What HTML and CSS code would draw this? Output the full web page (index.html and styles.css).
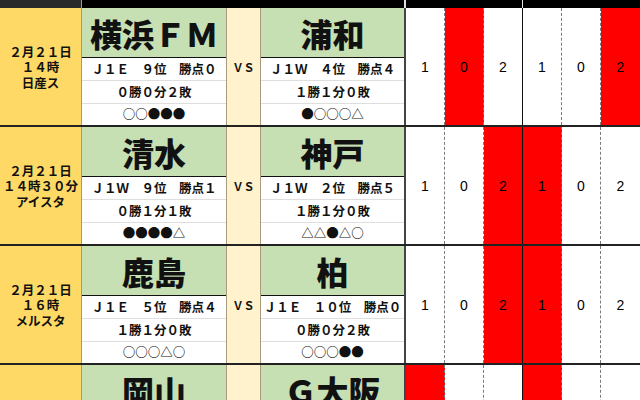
FILE: index.html
```html
<!DOCTYPE html>
<html lang="ja">
<head>
<meta charset="utf-8">
<link rel="stylesheet" href="styles.css">
</head>
<body>
<div class="sheet">
  <div class="row top">
    <div class="left"></div>
    <div class="team t1"></div>
    <div class="vs"></div>
    <div class="team t2"></div>
    <div class="sc"></div><div class="sc"></div><div class="sc mid"></div><div class="sc"></div><div class="sc"></div><div class="sc last"></div>
  </div>

  <div class="row block">
    <div class="left"><span>２月２１日</span><span>１４時</span><span>日産ス</span></div>
    <div class="team t1">
      <div class="name">横浜ＦＭ</div>
      <div class="info">Ｊ１Ｅ　９位　勝点０</div>
      <div class="info">０勝０分２敗</div>
      <div class="info last">○○●●●</div>
    </div>
    <div class="vs">ＶＳ</div>
    <div class="team t2">
      <div class="name">浦和</div>
      <div class="info">Ｊ１Ｗ　４位　勝点４</div>
      <div class="info">１勝１分０敗</div>
      <div class="info last">●○○○△</div>
    </div>
    <div class="sc">1</div><div class="sc red">0</div><div class="sc mid">2</div><div class="sc">1</div><div class="sc">0</div><div class="sc last red">2</div>
  </div>

  <div class="row block">
    <div class="left"><span>２月２１日</span><span>１４時３０分</span><span>アイスタ</span></div>
    <div class="team t1">
      <div class="name">清水</div>
      <div class="info">Ｊ１Ｗ　９位　勝点１</div>
      <div class="info">０勝１分１敗</div>
      <div class="info last">●●●●△</div>
    </div>
    <div class="vs">ＶＳ</div>
    <div class="team t2">
      <div class="name">神戸</div>
      <div class="info">Ｊ１Ｗ　２位　勝点５</div>
      <div class="info">１勝１分０敗</div>
      <div class="info last">△△●△○</div>
    </div>
    <div class="sc">1</div><div class="sc">0</div><div class="sc mid red">2</div><div class="sc red">1</div><div class="sc">0</div><div class="sc last">2</div>
  </div>

  <div class="row block">
    <div class="left"><span>２月２１日</span><span>１６時</span><span>メルスタ</span></div>
    <div class="team t1">
      <div class="name">鹿島</div>
      <div class="info">Ｊ１Ｅ　５位　勝点４</div>
      <div class="info">１勝１分０敗</div>
      <div class="info last">○○○△○</div>
    </div>
    <div class="vs">ＶＳ</div>
    <div class="team t2">
      <div class="name">柏</div>
      <div class="info wide">Ｊ１Ｅ　１０位　勝点０</div>
      <div class="info">０勝０分２敗</div>
      <div class="info last">○○○●●</div>
    </div>
    <div class="sc">1</div><div class="sc">0</div><div class="sc mid red">2</div><div class="sc red">1</div><div class="sc">0</div><div class="sc last">2</div>
  </div>

  <div class="row block">
    <div class="left"></div>
    <div class="team t1">
      <div class="name">岡山</div>
    </div>
    <div class="vs"></div>
    <div class="team t2">
      <div class="name">Ｇ大阪</div>
    </div>
    <div class="sc red"></div><div class="sc"></div><div class="sc mid"></div><div class="sc red"></div><div class="sc"></div><div class="sc last"></div>
  </div>
</div>
</body>
</html>
```

FILE: styles.css
```css
html, body {
  margin: 0;
  padding: 0;
  background: #ffffff;
}
body {
  width: 640px;
  height: 400px;
  overflow: hidden;
  font-family: "Noto Sans CJK JP", "Liberation Sans", sans-serif;
  color: #111;
}
.sheet {
  display: flex;
  flex-direction: column;
  height: 400px;
  overflow: hidden;
}
.row {
  display: flex;
  box-sizing: border-box;
  flex: none;
}
.row > div {
  box-sizing: border-box;
  flex: none;
}
.left { width: 82px; border-right: 1px solid #9a9a9a; }
.t1 { width: 144px; border-right: 1px solid #444; }
.vs { width: 35px; border-right: 1px solid #a89a7c; }
.t2 { width: 145px; border-right: 2px solid #444; }
.sc { width: 39px; border-right: 1px dashed #7a7a7a; }
.sc.mid { border-right: 1px solid #111; }
.sc.last { border-right: none; }

/* top black strip */
.top { height: 8px; background: #000; }
.top .left { background: #2a2a2a; border-right-color: #9a9a9a; }
.top .t1, .top .vs { border-right-color: #000; }
.top .t2 { border-right: 2px solid #ddd; }
.top .sc { border-right-color: #000; border-right-style: solid; }
.top .sc.mid { border-right-color: #e6e6e6; }

/* match block */
.block {
  height: 119px;
  border-bottom: 2px solid #222;
}
.block .left {
  background: #ffd966;
  display: flex;
  flex-direction: column;
  justify-content: center;
  align-items: center;
  font-size: 12.5px;
  font-weight: 700;
  padding-top: 1px;
}
.block .left span {
  display: block;
  height: 15.5px;
  line-height: 15.5px;
  white-space: nowrap;
}
.team {
  display: flex;
  flex-direction: column;
}
.name {
  height: 50px;
  flex: none;
  box-sizing: border-box;
  background: #c6e0b4;
  border-bottom: 1px solid #111;
  display: flex;
  align-items: center;
  justify-content: center;
  font-size: 32px;
  font-weight: 900;
  line-height: 1;
  color: #111;
}
.info {
  height: 23px;
  flex: none;
  box-sizing: border-box;
  border-bottom: 1px solid #dedede;
  display: flex;
  align-items: center;
  justify-content: center;
  font-size: 12.5px;
  font-weight: 700;
  line-height: 1;
  color: #111;
  white-space: nowrap;
}
.info.last { height: 21px; border-bottom: none; }
.block .vs {
  background: #fff2cc;
  border-left: 1px solid #a89a7c;
  width: 35px;
  display: flex;
  align-items: center;
  justify-content: center;
  font-size: 11px;
  font-weight: 700;
}
.block .t1 { border-right: 0; }
.block .sc {
  display: flex;
  align-items: center;
  justify-content: center;
  font-family: "Liberation Sans", Arial, sans-serif;
  font-size: 14px;
  color: #000;
}
.sc.red { background: #ff0000; }
```
